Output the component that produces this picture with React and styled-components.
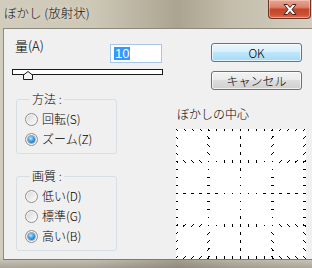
import React from "react";
import styled, { createGlobalStyle } from "styled-components";

const Global = createGlobalStyle`
  html, body { margin: 0; padding: 0; }
  body {
    width: 312px; height: 268px; overflow: hidden;
    background: #c9c3b2;
    font-family: "Noto Sans CJK JP", "Noto Sans", sans-serif;
  }
`;

const Window = styled.div`
  width: 312px; height: 268px; box-sizing: border-box;
  display: flex; flex-direction: column;
  padding: 0 0 8px 3px;
  overflow: hidden;
  background:
    linear-gradient(180deg, rgba(0,0,0,0) 0%, rgba(0,0,0,0) 96%, rgba(90,90,90,0.35) 100%),
    linear-gradient(90deg, #d2ccbd 0%, #cdc7b6 30%, #aaa490 57%, #c3bdab 74%, #d3cebf 100%);
`;

const TitleBar = styled.div`
  height: 28px; flex: none;
  display: flex; align-items: flex-start;
`;

const Title = styled.div`
  margin: 5px 0 0 1px;
  font-size: 12.5px; line-height: 15px; font-weight: 300;
  color: #141414;
  text-shadow: 0 0 6px rgba(255,255,255,0.7);
`;

const CloseButton = styled.div`
  margin-left: auto; margin-right: 1px;
  width: 43px; height: 19px; box-sizing: border-box;
  border: 1px solid #6e3326; border-top: none;
  border-radius: 0 0 4px 4px;
  background: linear-gradient(180deg, #e7a893 0%, #dc826a 40%, #c3452b 52%, #cc4f33 80%, #dd7356 100%);
  box-shadow: inset 0 0 0 1px rgba(255,220,210,0.45);
  display: flex; align-items: center; justify-content: center;
`;

const Client = styled.div`
  flex: 1;
  display: flex;
  background: #f0f0f0;
  border-top: 1px solid #8d897c;
  border-left: 1px solid #8d897c;
  border-bottom: 1px solid #7d796d;
  font-size: 12px; line-height: 14px; color: #000; font-weight: 300;
`;

const LeftCol = styled.div`
  width: 168px; flex: none;
  display: flex; flex-direction: column;
`;

const AmountRow = styled.div`
  display: flex; align-items: flex-start; justify-content: space-between;
  padding: 0 10px 0 11px;
`;

const AmountLabel = styled.div`
  margin-top: 10px;
  font-size: 13px;
`;

const NumberBox = styled.div`
  margin-top: 15px;
  width: 52px; height: 19px; box-sizing: border-box;
  border: 1px solid #a9c8e8;
  background: #fff;
  display: flex; align-items: center;
  padding-left: 3px;
`;

const Selected = styled.span`
  display: inline-block;
  height: 13px; line-height: 13px;
  padding: 0 1px;
  background: #3399ff; color: #fff;
  font-family: "Liberation Sans", Arial, sans-serif;
  font-size: 13px; font-weight: 400;
`;

const SliderTrack = styled.div`
  position: relative;
  margin: 6px 0 0 8px;
  width: 151px; height: 6px; box-sizing: border-box;
  border: 1px solid #1c1c1c;
  background: #fff;
`;

const Thumb = styled.svg`
  position: absolute;
  left: 10px; top: 1px;
`;

const Group = styled.fieldset`
  margin: ${p => p.$top}px 0 0 12px;
  width: 101px; box-sizing: border-box;
  border: 1px solid #d5dfe5;
  border-radius: 3px;
  padding: 3px 0 4px 8px;
  min-inline-size: 0;
`;

const Legend = styled.legend`
  margin-left: 5px;
  padding: 0 2px;
  font-size: 12px; line-height: 14px;
`;

const RadioRow = styled.div`
  height: 20px;
  display: flex; align-items: center; gap: 4px;
  font-size: 12px;
`;

const RadioMark = styled.span`
  width: 13px; height: 13px; box-sizing: border-box; flex: none;
  border-radius: 50%;
  border: 1px solid #8e8f8f;
  background: linear-gradient(135deg, #d4d4d4 0%, #ededed 55%, #fbfbfb 100%);
  box-shadow: inset 0 0 0 1px #f6f6f6;
  display: flex; align-items: center; justify-content: center;
`;

const RadioDot = styled.span`
  width: 7px; height: 7px; border-radius: 50%;
  background: radial-gradient(circle at 40% 35%, #c4ecff 0%, #4aa6e8 40%, #0c4d92 100%);
  box-shadow: 0 0 0 1px rgba(20,60,110,0.35);
`;

const RightCol = styled.div`
  flex: 1;
  display: flex; flex-direction: column;
`;

const Button = styled.div`
  margin: ${p => p.$top}px 0 0 39px;
  width: 91px; height: 19px; box-sizing: border-box;
  border-radius: 3px;
  border: 1px solid ${p => (p.$primary ? "#3c7fb1" : "#707070")};
  background: ${p =>
    p.$primary
      ? "linear-gradient(180deg, #eaf6fd 0%, #d9f0fc 45%, #bee6fd 50%, #a7d9f5 100%)"
      : "linear-gradient(180deg, #f2f2f2 0%, #ebebeb 45%, #dddddd 50%, #cfcfcf 100%)"};
  box-shadow: inset 0 0 0 1px rgba(255,255,255,0.7);
  display: flex; align-items: center; justify-content: center;
  font-size: 12px; line-height: 14px;
`;

const CenterLabel = styled.div`
  margin: 17px 0 0 5px;
  font-size: 12px; line-height: 14px;
`;

const GridBox = styled.svg`
  display: block;
  margin: 8px 0 0 4px;
  background: #fff;
`;

function RadioItem({ label, checked }) {
  return (
    <RadioRow>
      <RadioMark>{checked && <RadioDot />}</RadioMark>
      <span>{label}</span>
    </RadioRow>
  );
}

function CenterGrid() {
  const pos = [0.5, 32.5, 64.5, 96.5, 128.5];
  const c = 64.5;
  const items = [];
  const seen = new Set();
  const add = (x, y) => {
    const k = x + "," + y;
    if (seen.has(k)) return;
    seen.add(k);
    const dx = x - c, dy = y - c;
    const d = Math.hypot(dx, dy);
    if (d < 4) {
      items.push(<rect key={k} x={x - 0.5} y={y - 0.5} width="1" height="1" fill="#000" />);
      return;
    }
    const L = 1.4 + d * 0.03;
    const ux = dx / d, uy = dy / d;
    items.push(
      <line
        key={k}
        x1={x - (ux * L) / 2}
        y1={y - (uy * L) / 2}
        x2={x + (ux * L) / 2}
        y2={y + (uy * L) / 2}
        stroke="#000"
        strokeWidth="1"
      />
    );
  };
  pos.forEach(p => {
    for (let t = 0.5; t <= 129; t += 8) {
      add(t, p);
      add(p, t);
    }
  });
  return (
    <GridBox width="130" height="130" viewBox="0 0 130 130" shapeRendering="crispEdges">
      {items}
    </GridBox>
  );
}

export default function App() {
  return (
    <>
      <Global />
      <Window>
        <TitleBar>
          <Title>ぼかし (放射状)</Title>
          <CloseButton>
            <svg width="14" height="11" viewBox="0 0 14 11">
              <path
                d="M1 0.5 H4.5 L7 3.5 L9.5 0.5 H13 L9 5.5 L13 10.5 H9.5 L7 7.5 L4.5 10.5 H1 L5 5.5 Z"
                fill="#fff"
                stroke="#4a2018"
                strokeWidth="1"
                strokeLinejoin="round"
              />
            </svg>
          </CloseButton>
        </TitleBar>
        <Client>
          <LeftCol>
            <AmountRow>
              <AmountLabel>量(A)</AmountLabel>
              <NumberBox>
                <Selected>10</Selected>
              </NumberBox>
            </AmountRow>
            <SliderTrack>
              <Thumb width="10" height="9" viewBox="0 0 10 9">
                <path d="M0.5 8.5 V4 L5 0.5 L9.5 4 V8.5 Z" fill="#f4f4f4" stroke="#1c1c1c" strokeWidth="1" />
              </Thumb>
            </SliderTrack>
            <Group $top={17}>
              <Legend>方法 :</Legend>
              <RadioItem label="回転(S)" />
              <RadioItem label="ズーム(Z)" checked />
            </Group>
            <Group $top={15}>
              <Legend>画質 :</Legend>
              <RadioItem label="低い(D)" />
              <RadioItem label="標準(G)" />
              <RadioItem label="高い(B)" checked />
            </Group>
          </LeftCol>
          <RightCol>
            <Button $primary $top={14}>OK</Button>
            <Button $top={9}>キャンセル</Button>
            <CenterLabel>ぼかしの中心</CenterLabel>
            <CenterGrid />
          </RightCol>
        </Client>
      </Window>
    </>
  );
}
